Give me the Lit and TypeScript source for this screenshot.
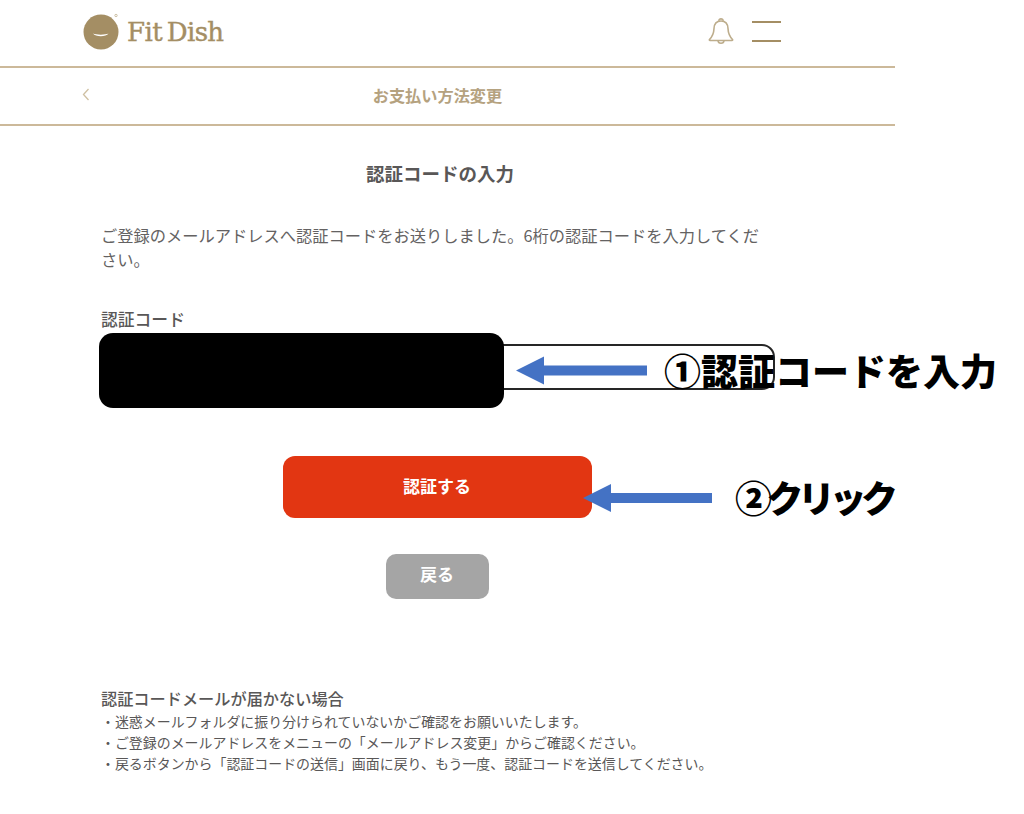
import { LitElement, html, css } from 'lit';
import { customElement } from 'lit/decorators.js';

@customElement('app-root')
export class AppRoot extends LitElement {
  static styles = css`
    :host {
      display: block;
      position: relative;
      width: 1024px;
      height: 814px;
      overflow: hidden;
      background: #fff;
      font-family: 'Noto Sans CJK JP', 'Noto Sans', sans-serif;
      color: #595757;
    }
    .page {
      width: 895px;
    }
    .header {
      box-sizing: border-box;
      border-bottom: 2px solid #ccb99a;
      display: flex;
      align-items: center;
      justify-content: space-between;
      padding: 0 114px 4px 82px;
      height: 68px;
    }
    .logo {
      display: flex;
      align-items: center;
      gap: 7px;
    }
    .logo-text {
      margin-top: 2px;
      font-family: 'DejaVu Serif', 'Liberation Serif', serif;
      font-size: 26px;
      line-height: 32px;
      color: #a48e64;
      letter-spacing: -0.6px;
      word-spacing: -3px;
      -webkit-text-stroke: 0.4px #a48e64;
    }
    .tools {
      display: flex;
      align-items: center;
      gap: 18px;
    }
    .bell {
      margin-left: -1px;
    }
    .menu {
      width: 29px;
      height: 21px;
      box-sizing: border-box;
      border-top: 2px solid #a48e64;
      border-bottom: 2px solid #a48e64;
    }
    .subheader {
      height: 58px;
      box-sizing: border-box;
      border-bottom: 2px solid #ccb99a;
      display: flex;
      align-items: center;
      padding-left: 82px;
    }
    .subheader h1 {
      flex: 1;
      margin: 0 0 3px -8px;
      padding-right: 102px;
      text-align: center;
      font-size: 16.2px;
      font-weight: 700;
      color: #b5a27f;
    }
    .back {
      display: block;
      margin-bottom: 4px;
    }
    .main {
      width: 672px;
      margin-left: 101px;
    }
    h2 {
      margin: 32px 0 0;
      padding-left: 6px;
      text-align: center;
      font-size: 18.5px;
      line-height: 30px;
      font-weight: 700;
      color: #595757;
    }
    .lead {
      margin: 35px 0 0;
      width: 664px;
      font-size: 16.25px;
      line-height: 24px;
      color: #646262;
    }
    .label {
      margin-top: 36px;
      font-size: 16.8px;
      line-height: 24px;
      font-weight: 500;
    }
    .field {
      display: block;
      height: 46px;
      box-sizing: border-box;
      margin-top: 13px;
      margin-left: -2px;
      width: 676px;
      border: 2px solid #262626;
      border-radius: 13px;
      background: #fff;
    }
    .actions {
      display: flex;
      flex-direction: column;
      align-items: center;
    }
    .btn {
      display: flex;
      align-items: center;
      justify-content: center;
      box-sizing: border-box;
      color: #fff;
      font-size: 17px;
      font-weight: 700;
    }
    .primary {
      width: 309px;
      height: 62px;
      margin-top: 66px;
      padding-bottom: 4px;
      border-radius: 12px;
      background: #e23612;
    }
    .secondary {
      width: 103px;
      height: 45px;
      margin-top: 36px;
      padding-bottom: 6px;
      border-radius: 10px;
      background: #a5a5a5;
    }
    .note {
      margin-top: 87px;
    }
    .note-title {
      font-size: 16.2px;
      line-height: 24px;
      font-weight: 500;
    }
    .note ul {
      list-style: none;
      margin: 1px 0 0;
      padding: 0;
      width: 760px;
      font-size: 13.95px;
      line-height: 21px;
    }
    /* reference has these drawn on top of the page */
    .redact {
      position: absolute;
      left: 99px;
      top: 333px;
      width: 405px;
      height: 75px;
      border-radius: 14px;
      background: #000;
    }
    .arrows {
      position: absolute;
      left: 0;
      top: 0;
    }
    .note-1,
    .note-2 {
      position: absolute;
      color: #000;
      font-weight: 900;
      white-space: nowrap;
      font-size: 37px;
      line-height: 52px;
    }
    .note-1 {
      left: 664px;
      top: 344px;
    }
    .note-2 {
      left: 735px;
      top: 471px;
      letter-spacing: -5.5px;
    }
  `;

  render() {
    return html`
      <div class="page">
        <header class="header">
          <div class="logo">
            <svg width="38" height="38" viewBox="0 0 38 38">
              <circle cx="19" cy="20" r="17.5" fill="#a48e64" />
              <path d="M11 21.5c2.500 3.500 13 3.500 15.500 0c-3 1.500-12.500 1.500-15.500 0z" fill="#fff" />
              <circle cx="34" cy="3.500" r="1.200" fill="none" stroke="#b9a884" stroke-width=".7" />
            </svg>
            <span class="logo-text">Fit Dish</span>
          </div>
          <div class="tools">
            <svg class="bell" width="26" height="30" viewBox="0 0 26 30" fill="none" stroke="#bdad8c" stroke-width="1.600">
              <path d="M13 5c-4.500 0-6.800 3.200-7 7.500c-.2 5-1.600 8-4.500 11c-.4.500-.1 1 .5 1h22c.6 0 .9-.5.500-1c-2.900-3-4.300-6-4.500-11C19.800 8.200 17.500 5 13 5z" />
              <path d="M11 5c-.6-2.800 4.600-2.800 4 0" />
              <path d="M10 24.500c.2 3.700 5.800 3.700 6 0" />
            </svg>
            <div class="menu"></div>
          </div>
        </header>
        <div class="subheader">
          <svg class="back" width="8" height="13" viewBox="0 0 8 13" fill="none" stroke="#cfc0a3" stroke-width="1.300">
            <path d="M6.500 1L1.500 6.500L6.500 12" />
          </svg>
          <h1>お支払い方法変更</h1>
        </div>
        <div class="main">
          <h2>認証コードの入力</h2>
          <p class="lead">ご登録のメールアドレスへ認証コードをお送りしました。6桁の認証コードを入力してください。</p>
          <div class="label">認証コード</div>
          <div class="field"></div>
          <div class="actions">
            <div class="btn primary">認証する</div>
            <div class="btn secondary">戻る</div>
          </div>
          <div class="note">
            <div class="note-title">認証コードメールが届かない場合</div>
            <ul>
              <li>・迷惑メールフォルダに振り分けられていないかご確認をお願いいたします。</li>
              <li>・ご登録のメールアドレスをメニューの「メールアドレス変更」からご確認ください。</li>
              <li>・戻るボタンから「認証コードの送信」画面に戻り、もう一度、認証コードを送信してください。</li>
            </ul>
          </div>
        </div>
      </div>
      <div class="redact"></div>
      <svg class="arrows" width="1024" height="814" viewBox="0 0 1024 814" fill="#4472c4">
        <path d="M516 370.500L544 356.500V365.500H647V375.500H544V384.500z" />
        <path d="M583 498L611 484V493H712V503H611V512z" />
      </svg>
      <div class="note-1">①認証コードを入力</div>
      <div class="note-2">②クリック</div>
    `;
  }
}
